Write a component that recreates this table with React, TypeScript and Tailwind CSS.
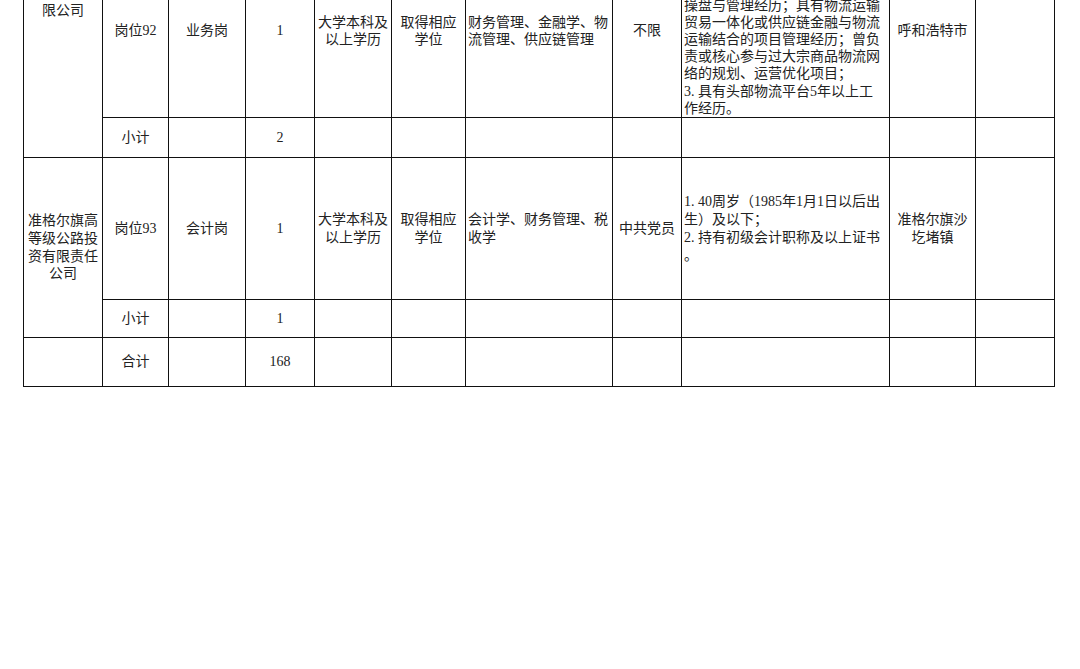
import React from "react";

const cols = [79, 66, 77, 69, 77, 74, 147, 69, 208, 86, 79];

const cell = "border border-[#111] px-[2px] py-0 align-middle";
const center = `${cell} text-center`;
const left = `${cell} text-left`;

function Lines({ lines }: { lines: string[] }) {
  return (
    <>
      {lines.map((l, i) => (
        <div key={i} className="whitespace-nowrap">
          {l}
        </div>
      ))}
    </>
  );
}

export default function App() {
  return (
    <div className="w-[1080px] h-[669px] overflow-hidden bg-white text-[#222] text-[14px] font-['Liberation_Serif','Noto_Sans_CJK_SC',serif]">
      <div className="-mt-[56px] ml-[23px]">
        <table className="table-fixed border-collapse w-[1031px] leading-[17.5px]">
          <colgroup>
            {cols.map((w, i) => (
              <col key={i} style={{ width: w }} />
            ))}
          </colgroup>
          <tbody>
            <tr className="h-[172px]">
              <td rowSpan={2} className={`${center} !align-top pt-[22px]`}>
                <Lines lines={["内蒙古交通", "物流集团有", "限公司"]} />
              </td>
              <td className={center}>岗位92</td>
              <td className={center}>业务岗</td>
              <td className={center}>1</td>
              <td className={center}>
                <Lines lines={["大学本科及", "以上学历"]} />
              </td>
              <td className={center}>
                <Lines lines={["取得相应", "学位"]} />
              </td>
              <td className={left}>
                <Lines lines={["财务管理、金融学、物", "流管理、供应链管理"]} />
              </td>
              <td className={center}>不限</td>
              <td className={`${left} leading-[17.2px]`}>
                <Lines
                  lines={[
                    "1. 40周岁（1985年1月1日以后出",
                    "生）及以下；",
                    "2. 具有大宗商品物流项目全流程",
                    "操盘与管理经历；具有物流运输",
                    "贸易一体化或供应链金融与物流",
                    "运输结合的项目管理经历；曾负",
                    "责或核心参与过大宗商品物流网",
                    "络的规划、运营优化项目；",
                    "3. 具有头部物流平台5年以上工",
                    "作经历。",
                  ]}
                />
              </td>
              <td className={center}>呼和浩特市</td>
              <td className={center}></td>
            </tr>
            <tr className="h-[40px]">
              <td className={center}>小计</td>
              <td className={center}></td>
              <td className={center}>2</td>
              <td className={center}></td>
              <td className={center}></td>
              <td className={center}></td>
              <td className={center}></td>
              <td className={center}></td>
              <td className={center}></td>
              <td className={center}></td>
            </tr>
            <tr className="h-[142px]">
              <td rowSpan={2} className={`${center} leading-[17.7px]`}>
                <Lines lines={["准格尔旗高", "等级公路投", "资有限责任", "公司"]} />
              </td>
              <td className={center}>岗位93</td>
              <td className={center}>会计岗</td>
              <td className={center}>1</td>
              <td className={center}>
                <Lines lines={["大学本科及", "以上学历"]} />
              </td>
              <td className={center}>
                <Lines lines={["取得相应", "学位"]} />
              </td>
              <td className={left}>
                <Lines lines={["会计学、财务管理、税", "收学"]} />
              </td>
              <td className={center}>中共党员</td>
              <td className={`${left} leading-[18px]`}>
                <Lines
                  lines={[
                    "1. 40周岁（1985年1月1日以后出",
                    "生）及以下；",
                    "2. 持有初级会计职称及以上证书",
                    "。",
                  ]}
                />
              </td>
              <td className={center}>
                <Lines lines={["准格尔旗沙", "圪堵镇"]} />
              </td>
              <td className={center}></td>
            </tr>
            <tr className="h-[38px]">
              <td className={center}>小计</td>
              <td className={center}></td>
              <td className={center}>1</td>
              <td className={center}></td>
              <td className={center}></td>
              <td className={center}></td>
              <td className={center}></td>
              <td className={center}></td>
              <td className={center}></td>
              <td className={center}></td>
            </tr>
            <tr className="h-[49px]">
              <td className={center}></td>
              <td className={center}>合计</td>
              <td className={center}></td>
              <td className={center}>168</td>
              <td className={center}></td>
              <td className={center}></td>
              <td className={center}></td>
              <td className={center}></td>
              <td className={center}></td>
              <td className={center}></td>
              <td className={center}></td>
            </tr>
          </tbody>
        </table>
      </div>
    </div>
  );
}
